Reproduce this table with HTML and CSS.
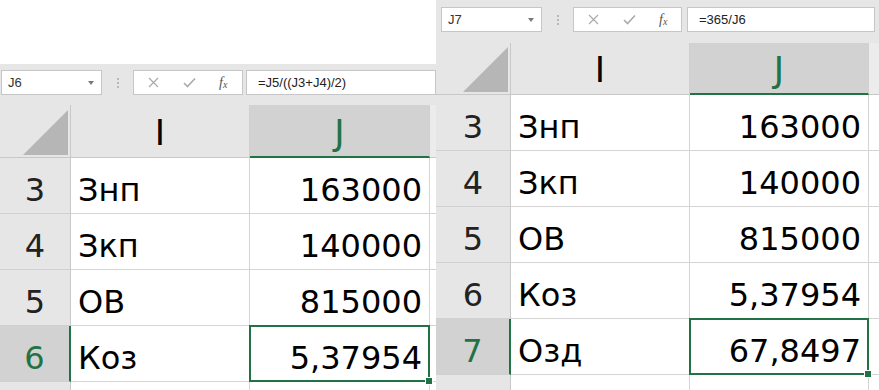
FILE: index.html
```html
<!DOCTYPE html>
<html lang="ru">
<head>
<meta charset="utf-8">
<title>Excel</title>
<link rel="stylesheet" href="styles.css">
</head>
<body>
<div class="page">
  <section class="panel panel-left">
    <div class="blank"></div>
    <div class="fbar">
      <div class="namebox"><span>J6</span><span class="caret"></span></div>
      <div class="dots"><span></span></div>
      <div class="btns">
        <svg class="ico" width="11" height="11" viewBox="0 0 11 11"><path d="M1 1L10 10M10 1L1 10" stroke="#aaa" stroke-width="1.2" fill="none"/></svg>
        <svg class="ico" width="13" height="11" viewBox="0 0 13 11"><path d="M1 6L4.5 9.5L12 1.5" stroke="#aaa" stroke-width="1.6" fill="none"/></svg>
        <span class="fx"><i>f</i><i class="sub">x</i></span>
      </div>
      <div class="formula">=J5/((J3+J4)/2)</div>
    </div>
    <div class="grid grid-left">
      <div class="corner"><span class="tri"></span></div>
      <div class="ch">I</div>
      <div class="ch sel">J</div>
      <div class="ch rest"></div>

      <div class="rh">3</div><div class="c">Знп</div><div class="c num">163000</div><div class="c rest"></div>
      <div class="rh">4</div><div class="c">Зкп</div><div class="c num">140000</div><div class="c rest"></div>
      <div class="rh">5</div><div class="c">ОВ</div><div class="c num">815000</div><div class="c rest"></div>
      <div class="rh sel">6</div><div class="c">Коз</div><div class="c num active">5,37954</div><div class="c rest"></div>
      <div class="rh"></div><div class="c"></div><div class="c"></div><div class="c rest"></div>
    </div>
  </section>

  <section class="panel panel-right">
    <div class="fbar">
      <div class="namebox"><span>J7</span><span class="caret"></span></div>
      <div class="dots"><span></span></div>
      <div class="btns">
        <svg class="ico" width="11" height="11" viewBox="0 0 11 11"><path d="M1 1L10 10M10 1L1 10" stroke="#aaa" stroke-width="1.2" fill="none"/></svg>
        <svg class="ico" width="13" height="11" viewBox="0 0 13 11"><path d="M1 6L4.5 9.5L12 1.5" stroke="#aaa" stroke-width="1.6" fill="none"/></svg>
        <span class="fx"><i>f</i><i class="sub">x</i></span>
      </div>
      <div class="formula">=365/J6</div>
    </div>
    <div class="grid grid-right">
      <div class="corner"><span class="tri"></span></div>
      <div class="ch">I</div>
      <div class="ch sel">J</div>
      <div class="ch rest"></div>

      <div class="rh">3</div><div class="c">Знп</div><div class="c num">163000</div><div class="c rest"></div>
      <div class="rh">4</div><div class="c">Зкп</div><div class="c num">140000</div><div class="c rest"></div>
      <div class="rh">5</div><div class="c">ОВ</div><div class="c num">815000</div><div class="c rest"></div>
      <div class="rh">6</div><div class="c">Коз</div><div class="c num">5,37954</div><div class="c rest"></div>
      <div class="rh sel">7</div><div class="c">Озд</div><div class="c num active">67,8497</div><div class="c rest"></div>
      <div class="rh"></div><div class="c"></div><div class="c"></div><div class="c rest"></div>
    </div>
  </section>
</div>
</body>
</html>
```

FILE: styles.css
```css
* { box-sizing: border-box; }
html, body { margin: 0; padding: 0; background: #fff; }
body { width: 879px; height: 390px; overflow: hidden; }

.page {
  display: flex;
  width: 879px;
  height: 390px;
  overflow: hidden;
}

.panel {
  display: flex;
  flex-direction: column;
  overflow: hidden;
  background: #e6e6e6;
}
.panel-left { width: 436px; flex: none; }
.panel-right { width: 443px; flex: none; }

.blank { height: 64px; background: #fff; flex: none; }

/* formula bar */
.fbar {
  display: flex;
  align-items: center;
  flex: none;
  font-family: "Liberation Sans", Arial, sans-serif;
  font-size: 13px;
  color: #222;
}
.panel-left .fbar { padding: 6px 0 10px 1px; }
.panel-right .fbar { padding: 7px 4px 11px 5px; }

.namebox {
  width: 101px;
  height: 25px;
  background: #fff;
  border: 1px solid #c6c6c6;
  display: flex;
  align-items: center;
  justify-content: space-between;
  padding: 0 7px 0 6px;
  color: #333;
  flex: none;
}
.caret {
  width: 0; height: 0;
  border-left: 3px solid transparent;
  border-right: 3px solid transparent;
  border-top: 4px solid #7a7a7a;
}

.dots {
  width: 31px;
  height: 25px;
  display: flex;
  align-items: center;
  justify-content: center;
  flex: none;
}
.dots span {
  width: 2px; height: 2px;
  background: #b8b8b8;
  box-shadow: 0 -4px 0 #b8b8b8, 0 4px 0 #b8b8b8;
}

.btns {
  width: 110px;
  height: 25px;
  background: #fff;
  border: 1px solid #c6c6c6;
  display: flex;
  align-items: center;
  padding-left: 14px;
  gap: 0;
  flex: none;
}
.panel-right .btns { width: 109px; }
.btns .ico:nth-child(1) { margin-right: 24px; }
.btns .ico:nth-child(2) { margin-right: 23px; }
.fx {
  font-family: "Liberation Serif", "Times New Roman", serif;
  font-size: 14px;
  color: #555;
  line-height: 1;
}
.fx .sub { font-size: 10px; position: relative; top: 1px; }

.formula {
  flex: 1;
  height: 25px;
  margin-left: 3px;
  background: #fff;
  border: 1px solid #c6c6c6;
  display: flex;
  align-items: center;
  padding-left: 11px;
  white-space: nowrap;
}
.panel-right .formula { margin-left: 5px; }

/* grid */
.grid {
  display: grid;
  flex: 1;
  font-family: "DejaVu Sans", sans-serif;
  font-size: 32px;
  color: #000;
}
.grid-left {
  grid-template-columns: 71px 179px 180px 1fr;
  grid-template-rows: 53px repeat(5, 56px);
}
.grid-right {
  grid-template-columns: 75px 179px 179px 1fr;
  grid-template-rows: 52px repeat(6, 56px);
}

.corner {
  background: #e6e6e6;
  border-right: 1px solid #c8c8c8;
  border-bottom: 1px solid #c8c8c8;
  display: flex;
  justify-content: flex-end;
  align-items: flex-end;
  padding: 0 2px 2px 0;
}
.tri {
  width: 45px;
  height: 45px;
  background: #b6b6b6;
  clip-path: polygon(100% 0, 100% 100%, 0 100%);
}

.ch {
  background: #e6e6e6;
  border-right: 1px solid #d0d0d0;
  border-bottom: 1px solid #c8c8c8;
  display: flex;
  justify-content: center;
  align-items: flex-end;
  font-size: 35px;
  line-height: 35px;
  padding-bottom: 6px;
}
.ch.sel {
  background: #d2d2d2;
  color: #217346;
  border-bottom: 2px solid #217346;
  padding-bottom: 5px;
}
.ch.rest { background: #ececec; border-right: none; }

.rh {
  background: #e6e6e6;
  border-right: 1px solid #c8c8c8;
  border-bottom: 1px solid #d0d0d0;
  display: flex;
  justify-content: center;
  align-items: flex-end;
  line-height: 32px;
  padding-bottom: 7px;
  color: #222;
}
.rh.sel {
  background: #d2d2d2;
  color: #217346;
  border-right: 2px solid #217346;
}

.c {
  background: #fff;
  border-right: 1px solid #d4d4d4;
  border-bottom: 1px solid #d4d4d4;
  display: flex;
  align-items: flex-end;
  line-height: 32px;
  padding: 0 7px 7px 7px;
  white-space: nowrap;
}
.c.num { justify-content: flex-end; }
.c.rest { border-right: none; }

.c.active { position: relative; }
.c.active::after {
  content: "";
  position: absolute;
  left: -1px; top: -1px; right: -1px; bottom: -1px;
  border: 2px solid #217346;
}
.c.active::before {
  content: "";
  position: absolute;
  right: -4px; bottom: -4px;
  width: 6px; height: 6px;
  background: #217346;
  border: 1px solid #fff;
  z-index: 2;
}
```
